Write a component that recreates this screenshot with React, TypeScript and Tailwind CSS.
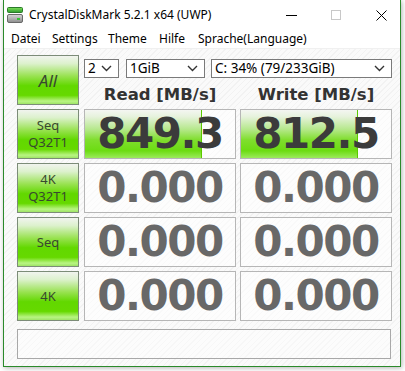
import React from 'react';

const hatch =
  'bg-[repeating-linear-gradient(135deg,#f2f2f2_0px,#f2f2f2_1px,#fafafa_1px,#fafafa_4px)]';

const AppIcon = () => (
  <svg width="16" height="16" viewBox="0 0 16 16">
    <defs>
      <linearGradient id="cdmTop" x1="0" y1="0" x2="0" y2="1">
        <stop offset="0" stopColor="#7fe05a" />
        <stop offset="1" stopColor="#2e9a2e" />
      </linearGradient>
      <linearGradient id="cdmBody" x1="0" y1="0" x2="0" y2="1">
        <stop offset="0" stopColor="#d8d8d8" />
        <stop offset="1" stopColor="#8c8c8c" />
      </linearGradient>
    </defs>
    <rect x="0.5" y="0.5" width="15" height="5" rx="1" fill="url(#cdmTop)" stroke="#2a7a2a" />
    <rect x="0.5" y="7.5" width="15" height="8" rx="1.5" fill="url(#cdmBody)" stroke="#6a6a6a" />
    <rect x="10" y="11" width="3" height="2" fill="#35c035" />
  </svg>
);

const Chevron = () => (
  <svg width="11" height="7" viewBox="0 0 11 7" className="shrink-0">
    <polyline points="1,1 5.5,5.5 10,1" fill="none" stroke="#333" strokeWidth="1.4" />
  </svg>
);

const Select = ({ children, className }: { children: React.ReactNode; className: string }) => (
  <div
    className={`h-[19px] flex items-center justify-between pl-[3px] pr-[6px] bg-white border border-[#7a7a7a] text-[13.5px] text-black leading-none ${className}`}
  >
    <span>{children}</span>
    <Chevron />
  </div>
);

const TestButton = ({ children, big }: { children: React.ReactNode; big?: boolean }) => (
  <div
    className={`w-[62px] h-full shrink-0 flex flex-col items-center justify-center border border-[#7c8c78] bg-[linear-gradient(to_bottom,#f1f4ef_0%,#dcf1cc_16%,#98e250_42%,#62d800_62%,#66d900_82%,#b9f483_94%,#9ee466_100%)] text-[#38482f] ${
      big ? 'text-[17px] italic leading-none' : 'text-[13px] leading-[17px]'
    }`}
  >
    {children}
  </div>
);

const Result = ({ value, pct, dark }: { value: string; pct: number; dark?: boolean }) => (
  <div className="relative w-[152px] h-full border border-[#b6b6b6] bg-white/50 flex items-center justify-center overflow-hidden">
    {pct > 0 && (
      <div
        className="absolute left-0 top-0 bottom-0 border-r border-[#5cc800] bg-[linear-gradient(to_bottom,#f4f6f2_0%,#e6f2dc_14%,#b6e88c_40%,#80de2e_62%,#6cdc12_85%,#9cea5c_100%)]"
        style={{ width: `${pct}%` }}
      />
    )}
    <span
      className={`relative font-['DejaVu_Sans',sans-serif] font-bold text-[42px] tracking-[-1.5px] leading-none ${
        dark ? 'text-[#3b3b3b]' : 'text-[#686868]'
      }`}
    >
      {value}
    </span>
  </div>
);

const rows = [
  { label: ['Seq', 'Q32T1'], read: '849.3', write: '812.5', readPct: 78, writePct: 78, dark: true },
  { label: ['4K', 'Q32T1'], read: '0.000', write: '0.000', readPct: 0, writePct: 0 },
  { label: ['Seq'], read: '0.000', write: '0.000', readPct: 0, writePct: 0 },
  { label: ['4K'], read: '0.000', write: '0.000', readPct: 0, writePct: 0 },
];

export default function App() {
  return (
    <div className="w-[405px] h-[371px] bg-white overflow-hidden font-['Noto_Sans',sans-serif]">
      <div className="ml-[3px] w-[398px] h-[367px] border border-t-0 border-[#2b8a2b] shadow-[1px_1px_5px_rgba(0,0,0,0.3)] flex flex-col bg-white">
        {/* Title bar */}
        <div className="h-[30px] flex items-center bg-white text-[12px] text-black">
          <div className="ml-[3px]">
            <AppIcon />
          </div>
          <span className="ml-[6px]">CrystalDiskMark 5.2.1 x64 (UWP)</span>
          <div className="flex-1" />
          <div className="w-[11px] h-px bg-black" />
          <div className="ml-[34px] w-[10px] h-[10px] border border-[#c8c8c8]" />
          <svg width="11" height="11" viewBox="0 0 11 11" className="ml-[35px] mr-[13px]">
            <path d="M0.5 0.5 L10.5 10.5 M10.5 0.5 L0.5 10.5" stroke="#000" strokeWidth="1" />
          </svg>
        </div>

        {/* Menu bar */}
        <div className="h-[19px] flex items-center pl-[7px] bg-white text-[12px] text-black border-b border-[#f0f0f0]">
          <span className="w-[41px]">Datei</span>
          <span className="w-[56px]">Settings</span>
          <span className="w-[51px]">Theme</span>
          <span className="w-[39px]">Hilfe</span>
          <span>Sprache(Language)</span>
        </div>

        {/* Content */}
        <div className={`flex-1 flex flex-col gap-[4px] pl-[13px] pt-[6px] ${hatch}`}>
          <div className="flex h-[50px] gap-[5px]">
            <TestButton big>All</TestButton>
            <div className="w-[308px] flex flex-col pt-[4px]">
              <div className="flex">
                <Select className="w-[35px]">2</Select>
                <Select className="w-[79px] ml-[7px]">1GiB</Select>
                <Select className="w-[181px] ml-[6px]">C: 34% (79/233GiB)</Select>
              </div>
              <div className="flex gap-[4px] mt-[7px] h-[20px] font-['DejaVu_Sans',sans-serif] font-bold text-[16.5px] leading-[20px] text-[#333]">
                <div className="w-[152px] text-center">Read [MB/s]</div>
                <div className="w-[152px] text-center">Write [MB/s]</div>
              </div>
            </div>
          </div>

          {rows.map((r) => (
            <div key={r.label.join('')} className="flex h-[50px] gap-[5px]">
              <TestButton>
                {r.label.map((l) => (
                  <span key={l}>{l}</span>
                ))}
              </TestButton>
              <div className="flex gap-[4px]">
                <Result value={r.read} pct={r.readPct} dark={r.dark} />
                <Result value={r.write} pct={r.writePct} dark={r.dark} />
              </div>
            </div>
          ))}

          <div className="mt-[4px] w-[374px] h-[30px] border border-[#a8a8a8] bg-white/40" />
        </div>
      </div>
    </div>
  );
}
